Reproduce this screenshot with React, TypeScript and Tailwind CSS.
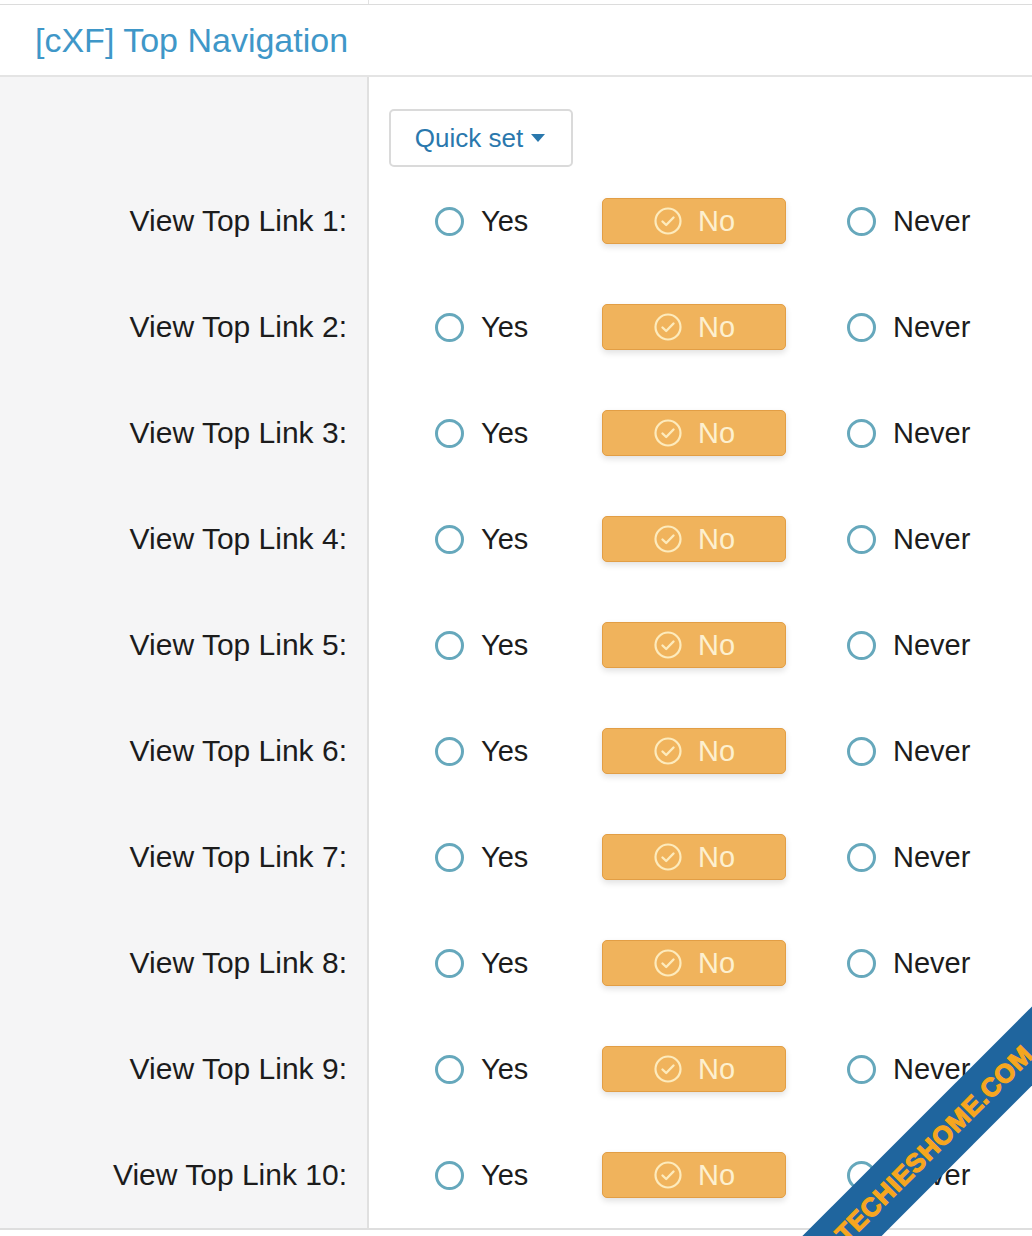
import React from 'react';

const rows = Array.from({ length: 10 }, (_, i) => i + 1);

const Radio: React.FC<{ label: string }> = ({ label }) => (
    <div className="flex items-center gap-[17px]">
        <span className="w-[29px] h-[29px] rounded-full border-[3px] border-[#66a8bc] bg-white shrink-0" />
        <span className="text-[29px] text-[#1c1c1c] leading-none">{label}</span>
    </div>
);

const CheckCircle: React.FC = () => (
    <svg width="30" height="30" viewBox="0 0 30 30" fill="none">
        <circle cx="15" cy="15" r="12.5" stroke="#fdebbd" strokeWidth="2.2" />
        <path d="M9.5 15.5 L13.2 19 L20.5 11.5" stroke="#fdebbd" strokeWidth="2.4" strokeLinecap="round" strokeLinejoin="round" />
    </svg>
);

const App: React.FC = () => {
    return (
        <div className="relative w-[1032px] h-[1236px] overflow-hidden bg-white font-['Liberation_Sans',Arial,sans-serif]">
            {/* top strip */}
            <div className="flex h-[5px] border-b border-[#dcdcdc]">
                <div className="w-[369px] border-r border-[#e2e2e2]" />
            </div>

            {/* Header */}
            <div className="h-[72px] flex items-center px-[35px] border-b-2 border-[#e4e4e4]">
                <h2 className="text-[34px] text-[#3f97c8] leading-none">[cXF] Top Navigation</h2>
            </div>

            {/* Body */}
            <div className="flex border-b-2 border-[#dedede]">
                <div className="w-[369px] shrink-0 bg-[#f5f5f6] border-r-2 border-[#e0e0e0]">
                    <div className="h-[91px]" />
                    {rows.map(n => (
                        <div key={n} className="h-[106px] flex items-center justify-end pr-[20px]">
                            <span className="text-[30px] text-[#1c1c1c] leading-none">View Top Link {n}:</span>
                        </div>
                    ))}
                </div>

                <div className="flex-1">
                    <div className="h-[91px] pt-[32px] pl-[20px]">
                        <button className="w-[184px] h-[58px] flex items-center justify-center gap-[8px] pr-[2px] rounded-[5px] border-2 border-[#dadada] bg-white text-[26px] text-[#2a78ad]">
                            Quick set
                            <svg width="14" height="8" viewBox="0 0 14 8">
                                <path d="M0 0 L14 0 L7 8 Z" fill="#2a78ad" />
                            </svg>
                        </button>
                    </div>
                    {rows.map(n => (
                        <div key={n} className="h-[106px] flex items-center pl-[66px]">
                            <div className="w-[167px]">
                                <Radio label="Yes" />
                            </div>
                            <button className="w-[184px] h-[46px] flex items-center justify-center gap-[15px] rounded-[5px] bg-[#f0b35c] border border-[#e29e45] shadow-[0_3px_6px_rgba(0,0,0,0.12)]">
                                <CheckCircle />
                                <span className="text-[29px] text-[#fdf0cf] leading-none">No</span>
                            </button>
                            <div className="ml-[61px]">
                                <Radio label="Never" />
                            </div>
                        </div>
                    ))}
                </div>
            </div>

            {/* Watermark ribbon */}
            <div className="absolute left-[744px] top-[1116px] w-[380px] h-[56px] bg-[#1f659e] -rotate-45 flex items-center justify-center">
                <span className="text-[26px] font-bold text-[#f6a61f] [-webkit-text-stroke:1.2px_#f6a61f] tracking-[0.5px] leading-none">TECHIESHOME.COM</span>
            </div>
        </div>
    );
};

export default App;
